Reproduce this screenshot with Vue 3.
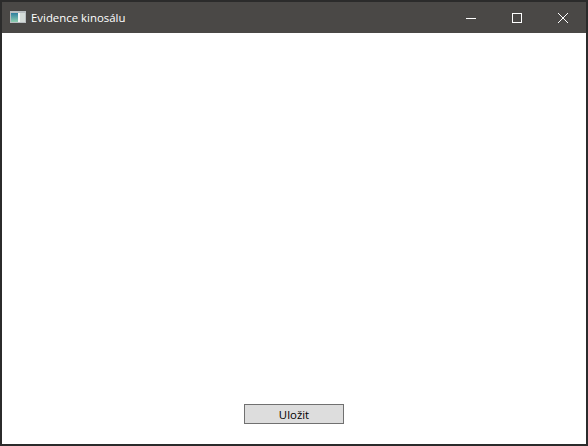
<script setup>
const title = 'Evidence kinosálu'
</script>

<template>
  <div class="window">
    <header class="titlebar">
      <svg class="app-icon" width="16" height="12" viewBox="0 0 16 12">
        <defs>
          <linearGradient id="pane" x1="0" y1="0" x2="0" y2="1">
            <stop offset="0" stop-color="#2f7f9f" />
            <stop offset="1" stop-color="#8fd0b0" />
          </linearGradient>
        </defs>
        <rect x="0" y="0" width="16" height="12" fill="#b9bec1" />
        <rect x="1" y="2" width="7" height="9" fill="url(#pane)" />
        <rect x="8" y="2" width="2" height="9" fill="#f4f7f6" />
        <rect x="10" y="2" width="5" height="9" fill="#d5dcd9" />
      </svg>
      <span class="title">{{ title }}</span>
      <div class="controls">
        <button class="control">
          <svg width="12" height="12" viewBox="0 0 12 12">
            <path d="M1 6.5H11" stroke="#fff" fill="none" />
          </svg>
        </button>
        <button class="control">
          <svg width="12" height="12" viewBox="0 0 12 12">
            <rect x="1.5" y="1.5" width="9" height="9" stroke="#fff" fill="none" />
          </svg>
        </button>
        <button class="control">
          <svg width="12" height="12" viewBox="0 0 12 12">
            <path d="M1 1L11 11M11 1L1 11" stroke="#fff" fill="none" />
          </svg>
        </button>
      </div>
    </header>
    <main class="content">
      <button class="save">Uložit</button>
    </main>
  </div>
</template>

<style scoped>
.window {
  box-sizing: border-box;
  width: 588px;
  height: 446px;
  display: flex;
  flex-direction: column;
  border: 2px solid #2b2b2b;
  background: #fff;
  font-family: "Open Sans", "Noto Sans", sans-serif;
}

.titlebar {
  height: 31px;
  flex: none;
  display: flex;
  align-items: center;
  padding-left: 8px;
  background: #4a4846;
  color: #fff;
}

.app-icon {
  flex: none;
  margin-bottom: 1px;
}

.title {
  margin-left: 5px;
  font-size: 11.4px;
}

.controls {
  margin-left: auto;
  display: flex;
}

.control {
  width: 46px;
  height: 31px;
  padding: 0;
  border: none;
  background: transparent;
  display: flex;
  align-items: center;
  justify-content: center;
}

.content {
  flex: 1;
  display: flex;
  justify-content: center;
  align-items: flex-end;
  padding-bottom: 20px;
}

.save {
  box-sizing: border-box;
  width: 100px;
  height: 20px;
  padding: 0;
  border: 1px solid #707070;
  background: #dddddd;
  color: #000;
  font-family: inherit;
  font-size: 11.4px;
}
</style>
